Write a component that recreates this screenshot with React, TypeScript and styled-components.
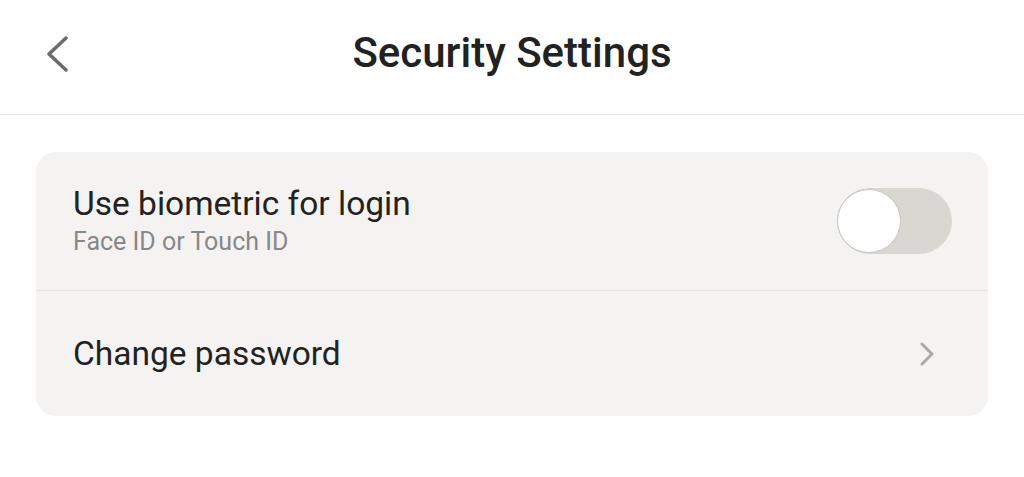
import React, { useState } from 'react';
import styled, { createGlobalStyle } from 'styled-components';

const GlobalStyle = createGlobalStyle`
  html, body {
    margin: 0;
    padding: 0;
    background: #ffffff;
    font-family: Roboto, "Noto Sans", sans-serif;
  }
`;

const Page = styled.div`
  width: 1024px;
  min-height: 477px;
  background: #fff;
`;

const Header = styled.header`
  height: 114px;
  display: grid;
  grid-template-columns: 114px 1fr 114px;
  align-items: center;
  border-bottom: 1px solid #e8e8e8;
`;

const BackButton = styled.button`
  border: none;
  background: none;
  padding: 0 0 6px 47px;
  display: flex;
  align-items: center;
  height: 100%;
  cursor: pointer;
`;

const Title = styled.h1`
  margin: 0;
  text-align: center;
  font-size: 42px;
  font-weight: 500;
  color: #222;
  padding-bottom: 10px;
`;

const Content = styled.main`
  padding: 37px 36px;
`;

const Card = styled.section`
  background: #f4f3f1;
  border-radius: 20px;
  overflow: hidden;
`;

const Row = styled.div<{ $tall?: boolean }>`
  display: flex;
  align-items: center;
  justify-content: space-between;
  height: ${p => (p.$tall ? 138 : 125)}px;
  padding: 0 36px 0 37px;
  & + & {
    border-top: 1px solid #e6e4e1;
  }
`;

const Texts = styled.div`
  display: flex;
  flex-direction: column;
  gap: 3px;
  margin-bottom: 2px;
`;

const Label = styled.div`
  font-size: 33.5px;
  line-height: 40px;
  color: #222;
`;

const Hint = styled.div`
  font-size: 25px;
  line-height: 30px;
  color: #888;
`;

const Switch = styled.button<{ $on: boolean }>`
  position: relative;
  width: 115px;
  height: 66px;
  border-radius: 33px;
  border: none;
  padding: 0;
  background: ${p => (p.$on ? '#4cd964' : '#d9d7d2')};
  cursor: pointer;
`;

const Knob = styled.span<{ $on: boolean }>`
  position: absolute;
  top: 1px;
  left: ${p => (p.$on ? '50px' : '0')};
  width: 62px;
  height: 62px;
  border-radius: 50%;
  background: #fff;
  border: 1px solid #c9c7c3;
  box-sizing: content-box;
`;

const ChevronBox = styled.span<{ $right?: number }>`
  display: flex;
  margin-right: ${p => p.$right ?? 0}px;
`;

const Chevron = ({ dir, color, w, h, sw }: { dir: 'left' | 'right'; color: string; w: number; h: number; sw: number }) => (
  <svg width={w} height={h} viewBox={`0 0 ${w} ${h}`} fill="none">
    <polyline
      points={dir === 'left' ? `${w - 2},2 2,${h / 2} ${w - 2},${h - 2}` : `2,2 ${w - 2},${h / 2} 2,${h - 2}`}
      stroke={color}
      strokeWidth={sw}
      strokeLinecap="round"
      strokeLinejoin="round"
    />
  </svg>
);

export default function App() {
  const [on, setOn] = useState(false);
  return (
    <Page>
      <GlobalStyle />
      <Header>
        <BackButton aria-label="Back">
          <Chevron dir="left" color="#6b6b6b" w={21} h={36} sw={3.5} />
        </BackButton>
        <Title>Security Settings</Title>
        <div />
      </Header>
      <Content>
        <Card>
          <Row $tall>
            <Texts>
              <Label>Use biometric for login</Label>
              <Hint>Face ID or Touch ID</Hint>
            </Texts>
            <Switch $on={on} onClick={() => setOn(!on)} aria-label="Use biometric">
              <Knob $on={on} />
            </Switch>
          </Row>
          <Row>
            <Label>Change password</Label>
            <ChevronBox $right={18}>
              <Chevron dir="right" color="#aaa" w={14} h={24} sw={3} />
            </ChevronBox>
          </Row>
        </Card>
      </Content>
    </Page>
  );
}
